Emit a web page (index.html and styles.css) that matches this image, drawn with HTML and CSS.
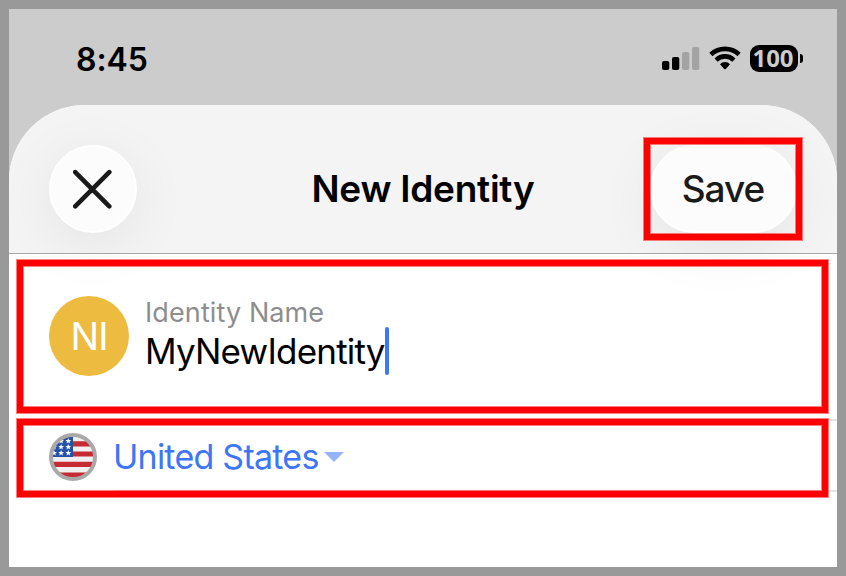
FILE: index.html
```html
<!DOCTYPE html>
<html lang="en">
<head>
    <meta charset="UTF-8">
    <meta name="viewport" content="width=device-width, initial-scale=1.0">
    <title>New Identity</title>
    <link rel="stylesheet" href="styles.css">
</head>
<body>
    <div class="screen">
        <div class="status-bar">
            <span class="time">8:45</span>
            <div class="status-icons">
                <svg class="signal" width="38" height="24" viewBox="0 0 38 24">
                    <rect x="0" y="14" width="7.3" height="9" rx="2"/>
                    <rect x="10" y="10" width="7.3" height="13" rx="2"/>
                    <rect class="off" x="20" y="5" width="7.3" height="18" rx="2"/>
                    <rect class="off" x="30" y="0" width="7.3" height="23" rx="2"/>
                </svg>
                <svg class="wifi" width="32" height="24" viewBox="0 0 32 24">
                    <path d="M0.3 6.8 A22.6 22.6 0 0 1 31.7 6.8 L28.5 10.2 A18 18 0 0 0 3.5 10.2 Z"/>
                    <path d="M5.5 12.4 A14.8 14.8 0 0 1 26.5 12.4 L23.3 15.8 A10.4 10.4 0 0 0 8.7 15.8 Z"/>
                    <path d="M11 18.2 A7 7 0 0 1 21 18.2 L16.7 22.9 Q16 23.7 15.3 22.9 Z"/>
                </svg>
                <div class="battery">100</div>
            </div>
        </div>

        <div class="sheet">
            <div class="header">
                <button type="button" class="close-btn" aria-label="Close">
                    <svg width="40" height="40" viewBox="0 0 40 40">
                        <path d="M2.2 3.2 L36.3 37.3 M36.3 3.2 L2.2 37.3"/>
                    </svg>
                </button>
                <h1>New Identity</h1>
                <button type="button" class="save-btn">Save</button>
                <div class="highlight highlight-save"></div>
            </div>

            <div class="row identity">
                <div class="avatar">NI</div>
                <div class="field">
                    <div class="label">Identity Name</div>
                    <div class="value"><span>MyNewIdentity</span><i class="caret"></i></div>
                </div>
                <div class="highlight highlight-name"></div>
            </div>

            <div class="row country">
                <svg class="flag" width="48" height="48" viewBox="0 0 48 48">
                    <clipPath id="round"><circle cx="24" cy="24" r="21"/></clipPath>
                    <g clip-path="url(#round)">
                        <rect width="48" height="48" fill="#f1eff1"/>
                        <path d="M0 10.8h48M0 21h48M0 31.4h48M0 42h48" stroke="#c62a32" stroke-width="5.2"/>
                        <rect width="24" height="24" fill="#2352a8"/>
                        <g fill="#fff">
                            <path id="star" d="M19.3 4.9l.8 2 2.1.1-1.6 1.4.5 2.1-1.8-1.2-1.8 1.2.5-2.1-1.6-1.4 2.1-.1z"/>
                            <use href="#star" x="-7.2"/>
                            <use href="#star" y="6"/>
                            <use href="#star" x="-7.2" y="6"/>
                            <use href="#star" x="-14.3" y="6"/>
                            <use href="#star" y="12"/>
                            <use href="#star" x="-7.2" y="12"/>
                            <use href="#star" x="-14.3" y="12"/>
                        </g>
                    </g>
                    <circle cx="24" cy="24" r="22" fill="none" stroke="#a9a9a9" stroke-width="4"/>
                </svg>
                <span class="country-name">United States</span>
                <span class="arrow"></span>
                <div class="highlight highlight-country"></div>
            </div>
        </div>
    </div>
</body>
</html>
```
FILE: styles.css
```css
* {
    box-sizing: border-box;
}

body {
    margin: 0;
    background: #999;
    font-family: Inter, "Liberation Sans", sans-serif;
    color: #000;
}

.screen {
    width: 846px;
    height: 576px;
    border: 9px solid #999;
    background: #ccc;
    overflow: hidden;
}

/* Status bar */
.status-bar {
    display: flex;
    justify-content: space-between;
    height: 96px;
    padding: 34px 33px 0 67px;
}

.time {
    padding-top: 1px;
    font-size: 32px;
    font-weight: 600;
    line-height: 32px;
    letter-spacing: -0.1px;
}

.status-icons {
    display: flex;
    align-items: flex-start;
}

.signal {
    margin: 4px 9px 0 0;
}

.signal .off {
    fill: #a3a3a3;
}

.wifi {
    margin: 3px 9px 0 0;
}

.battery {
    position: relative;
    width: 48px;
    height: 27px;
    margin: 2px 6px 0 0;
    padding-right: 2px;
    border-radius: 9px;
    background: #000;
    color: #ccc;
    font-family: "Open Sans", sans-serif;
    font-size: 24px;
    font-weight: 700;
    line-height: 25px;
    text-align: center;
}

.battery::after {
    content: "";
    position: absolute;
    top: 9px;
    right: -5px;
    width: 3px;
    height: 9px;
    border-radius: 0 4px 4px 0;
    background: #000;
}

/* Sheet */
.sheet {
    height: 462px;
    border-radius: 76px 76px 0 0;
    background: #fff;
}

.header {
    position: relative;
    z-index: 1;
    display: grid;
    grid-template-columns: 1fr auto 1fr;
    align-items: center;
    height: 149px;
    padding: 20px 40px 0;
    border-bottom: 1px solid #aaa;
    border-radius: 76px 76px 0 0;
    background: #f4f4f4;
}

.header h1 {
    margin: 0;
    font-size: 37px;
    font-weight: 600;
    line-height: 44px;
    letter-spacing: -0.25px;
}

button {
    height: 88px;
    padding: 0;
    border: 2px solid #fff;
    border-radius: 44px;
    background: #fcfcfc;
    box-shadow: 0 12px 60px rgba(0, 0, 0, 0.07);
    color: #1a1a1a;
    font-family: inherit;
}

.close-btn {
    width: 88px;
}

.close-btn svg {
    display: block;
    margin: 0 auto;
    fill: none;
    stroke: #1a1a1a;
    stroke-width: 4.6;
    stroke-linecap: round;
}

.save-btn {
    justify-self: end;
    width: 147px;
    padding-right: 1px;
    padding-bottom: 2px;
    font-size: 37px;
    font-weight: 500;
    letter-spacing: -1px;
}

/* Rows */
.row {
    position: relative;
    display: flex;
    align-items: center;
    padding: 0 40px;
}

.row::after {
    content: "";
    position: absolute;
    right: 0;
    bottom: 0;
    left: 104px;
    height: 2px;
    background: #e6e6e6;
}

.identity {
    height: 167px;
    padding-bottom: 3px;
}

.avatar {
    width: 80px;
    height: 80px;
    margin-right: 16px;
    border-radius: 50%;
    background: #eebb41;
    color: #fff;
    font-size: 38px;
    line-height: 80px;
    letter-spacing: -1px;
    text-align: center;
}

.label {
    padding-top: 1px;
    color: #8e8e8e;
    font-size: 27px;
    line-height: 30px;
    letter-spacing: 0.1px;
}

.value {
    display: flex;
    align-items: center;
    height: 48px;
    margin: -1px 0 1px;
    font-size: 35px;
    letter-spacing: -0.8px;
}

.caret {
    width: 4px;
    height: 48px;
    border-radius: 2px;
    background: #3d76f7;
}

.country {
    height: 71px;
    padding-top: 1px;
}

.country-name {
    margin-left: 16px;
    padding-bottom: 2px;
    color: #3d76f7;
    font-size: 34px;
    letter-spacing: -0.75px;
}

.arrow {
    margin-left: 5px;
    border: 10px solid transparent;
    border-top-color: #94b5fb;
    border-bottom: 0;
}

/* Red boxes round the parts to fill in */
.highlight {
    position: absolute;
    z-index: 2;
    border: 6px solid #f00;
    outline: 1px solid rgba(255, 0, 0, 0.5);
    box-shadow: inset 0 0 0 1px rgba(255, 0, 0, 0.5);
}

.highlight-save {
    top: 33px;
    right: 35px;
    width: 158px;
    height: 102px;
}

.highlight-name {
    top: 6px;
    left: 8px;
    right: 9px;
    height: 153px;
}

.highlight-country {
    top: -2px;
    left: 8px;
    right: 9px;
    height: 78px;
}
```
